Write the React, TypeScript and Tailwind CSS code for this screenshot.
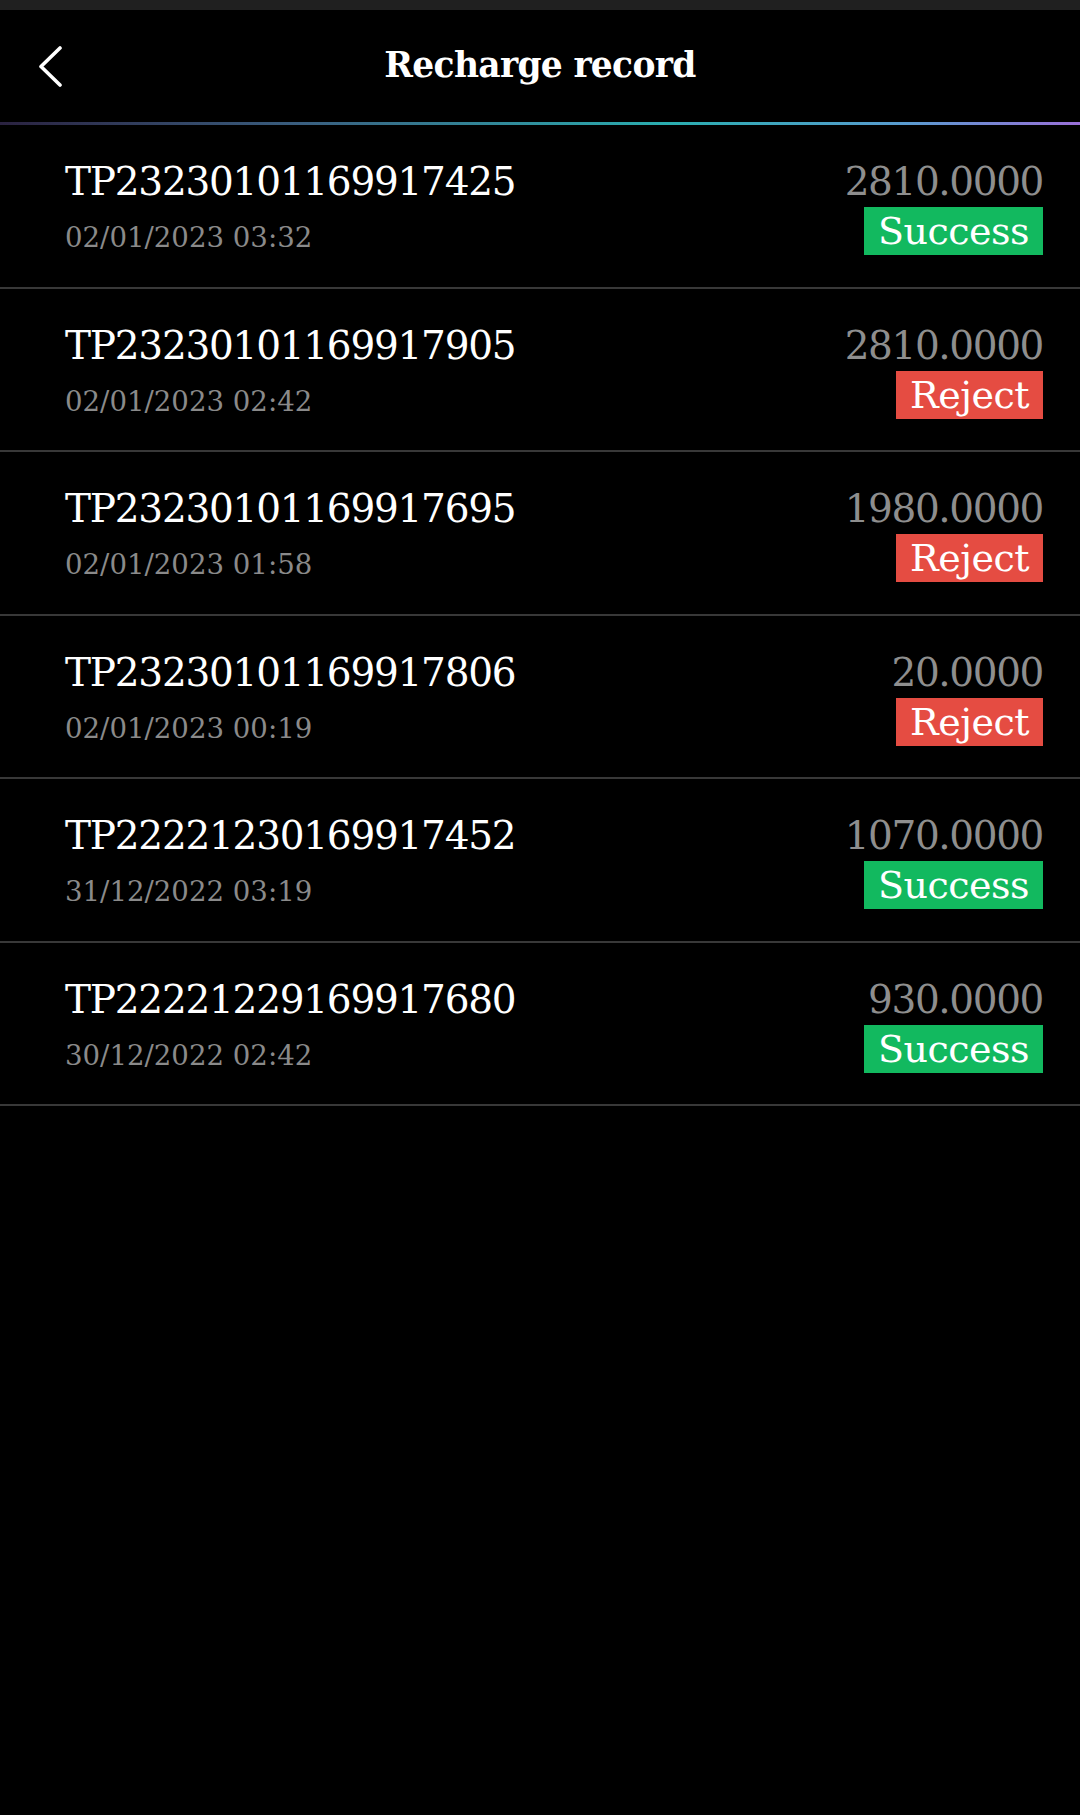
import React from "react";

type Rec = { id: string; date: string; amount: string; status: "Success" | "Reject" };

const records: Rec[] = [
  { id: "TP23230101169917425", date: "02/01/2023 03:32", amount: "2810.0000", status: "Success" },
  { id: "TP23230101169917905", date: "02/01/2023 02:42", amount: "2810.0000", status: "Reject" },
  { id: "TP23230101169917695", date: "02/01/2023 01:58", amount: "1980.0000", status: "Reject" },
  { id: "TP23230101169917806", date: "02/01/2023 00:19", amount: "20.0000", status: "Reject" },
  { id: "TP22221230169917452", date: "31/12/2022 03:19", amount: "1070.0000", status: "Success" },
  { id: "TP22221229169917680", date: "30/12/2022 02:42", amount: "930.0000", status: "Success" },
];

function Row({ r }: { r: Rec }) {
  return (
    <div className="flex justify-between border-b-2 border-[#383838] pt-[34px] pb-[30.5px] pl-[65px] pr-[37px]">
      <div className="flex flex-col">
        <div className="text-[39px] leading-[46px] tracking-[-1.25px] text-white">{r.id}</div>
        <div className="mt-[15px] text-[27.6px] leading-[36px] text-[#8a8a8a]">{r.date}</div>
      </div>
      <div className="flex flex-col items-end">
        <div className="text-[39px] leading-[46px] tracking-[-1.4px] text-[#8e8e8e]">{r.amount}</div>
        <div
          className={
            "mt-[2px] flex h-[48px] items-center px-[14px] text-[38px] leading-[48px] tracking-[-0.5px] text-white " +
            (r.status === "Success" ? "bg-[#12b95f]" : "bg-[#e54c42]")
          }
        >
          {r.status}
        </div>
      </div>
    </div>
  );
}

export default function App() {
  return (
    <div className="min-h-[1815px] w-[1080px] bg-black font-['DejaVu_Serif',serif]">
      <div className="h-[10px] bg-[#202020]" />
      <div className="grid h-[112px] grid-cols-[1fr_auto_1fr] items-center">
        <div className="pl-[38px]">
          <svg width="26" height="42" viewBox="0 0 26 42" fill="none">
            <polyline
              points="22,3 3,21.5 22,40"
              stroke="white"
              strokeWidth="3.6"
              strokeLinecap="round"
              strokeLinejoin="round"
            />
          </svg>
        </div>
        <div className="text-[34.5px] font-bold tracking-[-0.7px] text-white">Recharge record</div>
        <div />
      </div>
      <div className="h-[3px] bg-[linear-gradient(90deg,#2a2240_0%,#3a5f80_28%,#2aaeb0_62%,#5a9bd0_84%,#9a70d8_100%)]" />
      <div>
        {records.map((r) => (
          <Row key={r.id} r={r} />
        ))}
      </div>
    </div>
  );
}
